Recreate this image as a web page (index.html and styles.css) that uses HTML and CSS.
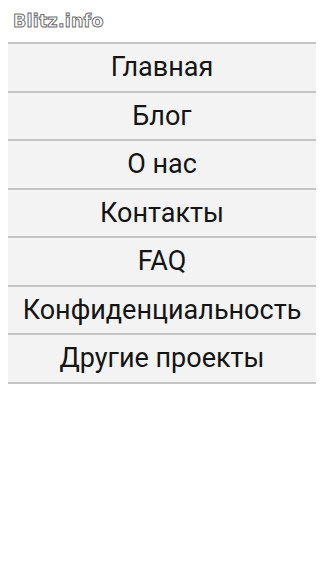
FILE: index.html
```html
<!DOCTYPE html>
<html lang="ru">
<head>
    <meta charset="UTF-8">
    <meta name="viewport" content="width=device-width, initial-scale=1.0">
    <title>Blitz.info</title>
    <link rel="stylesheet" href="styles.css">
</head>
<body>
    <div class="logo">Blitz.info</div>
    <ul class="menu">
        <li><a href="#">Главная</a></li>
        <li><a href="#">Блог</a></li>
        <li><a href="#">О нас</a></li>
        <li><a href="#">Контакты</a></li>
        <li><a href="#">FAQ</a></li>
        <li><a href="#">Конфиденциальность</a></li>
        <li><a href="#">Другие проекты</a></li>
    </ul>
</body>
</html>
```

FILE: styles.css
```css
body {
    margin: 8px;
    background-color: #fff;
    font-family: Roboto, "Liberation Sans", sans-serif;
}
.logo {
    height: 34px;
    line-height: 26px;
    padding-left: 5px;
    font-family: "DejaVu Sans", sans-serif;
    font-weight: bold;
    font-size: 17.5px;
    letter-spacing: 0.2px;
    color: #fff;
    -webkit-text-stroke: 1px #6f6f6f;
}
.menu {
    list-style: none;
    margin: 0;
    padding: 0;
    border-top: 2px solid #c4c4c4;
}
.menu li {
    background-color: #f3f3f3;
    border-bottom: 2px solid #c4c4c4;
    text-align: center;
}
.menu a {
    display: block;
    height: 46.5px;
    line-height: 46px;
    font-size: 27px;
    color: #141414;
    text-decoration: none;
}
```
